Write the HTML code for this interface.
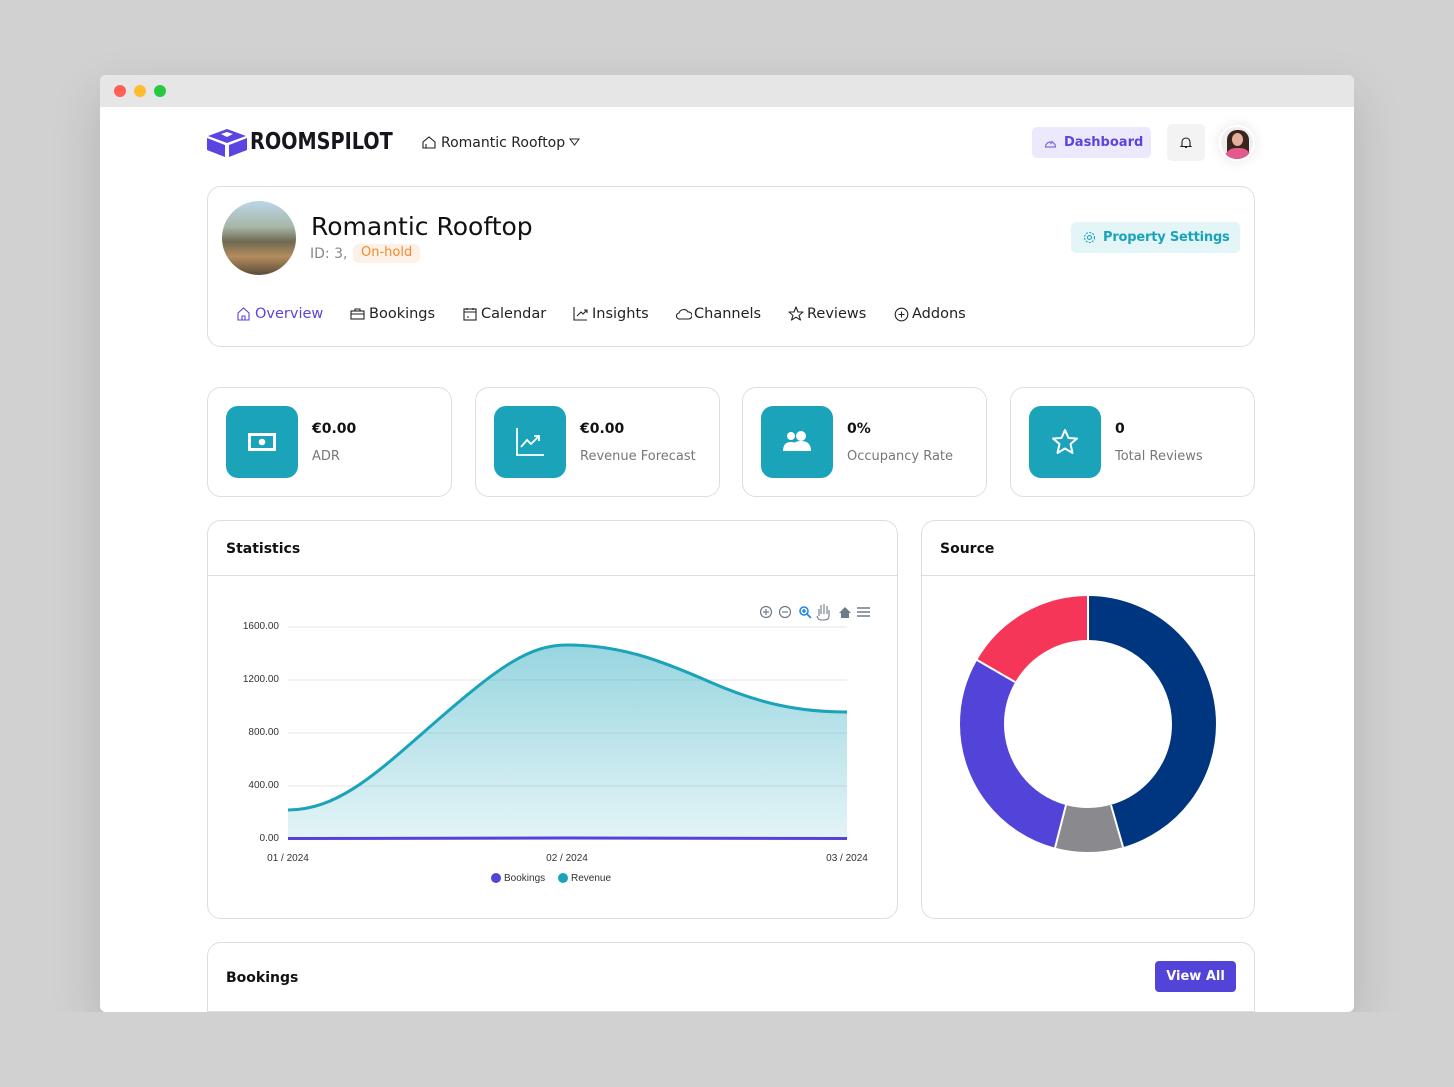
<!DOCTYPE html>
<html><head><meta charset="utf-8"><style>
*{box-sizing:border-box;margin:0;padding:0}
body{width:1454px;height:1087px;background:#d1d1d1;font-family:"DejaVu Sans","Liberation Sans",sans-serif;position:relative;overflow:hidden;color:#111}
.win{position:absolute;left:100px;top:75px;width:1254px;height:937px;background:#fff;border-radius:6px;overflow:hidden;box-shadow:0 20px 50px rgba(0,0,0,.15)}
.bar{height:32px;background:#e6e6e6;position:relative}
.dot{position:absolute;top:10px;width:12px;height:12px;border-radius:50%}
.a{position:absolute}
.card{position:absolute;border:1px solid #dedede;border-radius:14px;background:#fff}
.ic{position:absolute;left:18px;top:18px;width:72px;height:72px;border-radius:12px;background:#1aa3b9}
.val{position:absolute;left:104px;top:33px;font-weight:bold;font-size:14px}
.lbl{position:absolute;left:104px;top:61px;font-size:13px;color:#777}
.nav{position:absolute;top:306px;font-size:14.5px;color:#222}
.ni{position:absolute;top:306px}
.h{position:absolute;left:18px;top:20px;font-weight:bold;font-size:14px}
</style></head><body>
<div class="win">
<div class="bar"><div class="dot" style="left:14px;background:#fe5f57"></div><div class="dot" style="left:34px;background:#febc2e"></div><div class="dot" style="left:54px;background:#28c840"></div></div>
</div>
<!-- header -->
<svg class="a" style="left:207px;top:129px" width="40" height="28" viewBox="0 0 40 28"><polygon points="20,0 39,7 20,14 1,7" fill="#5b45e0"/><polygon points="0,9 18,16 18,28 0,21" fill="#5b45e0"/><polygon points="40,9 22,16 22,28 40,21" fill="#5b45e0"/><polygon points="14,5 20,3 26,5 20,8" fill="#fff"/></svg>
<div class="a" style="left:250px;top:129px;font-size:23px;font-weight:bold;color:#16161e;transform:scaleX(.93);transform-origin:left;font-family:'DejaVu Sans Condensed','DejaVu Sans',sans-serif">ROOMSPILOT</div>
<svg class="a" style="left:422px;top:136px" width="14" height="13" viewBox="0 0 14 13"><path d="M1 12V6l6-5 6 5v6zM4 12V8" fill="none" stroke="#222" stroke-width="1.1"/></svg>
<div class="a" style="left:441px;top:135px;font-size:14px;color:#222">Romantic Rooftop</div>
<svg class="a" style="left:569px;top:138px" width="11" height="8"><path d="M1 1h9L5.5 7z" fill="none" stroke="#222" stroke-width="1"/></svg>
<div class="a" style="left:1032px;top:127px;width:119px;height:31px;background:#ebe9fb;border-radius:5px;color:#5a45dc;font-weight:bold;font-size:13px;padding:8px 0 0 32px">Dashboard</div>
<svg class="a" style="left:1044px;top:137px" width="13" height="12" viewBox="0 0 13 12"><path d="M1.5 10a5 5 0 1 1 10 0Z M6.5 7l2-3" fill="none" stroke="#7d6ee6" stroke-width="1.2"/></svg>
<div class="a" style="left:1167px;top:124px;width:38px;height:37px;background:#f3f3f3;border-radius:5px"></div>
<svg class="a" style="left:1180px;top:136px" width="12" height="13" viewBox="0 0 12 13"><path d="M2 9.5V6a4 4 0 0 1 8 0v3.5l1 1H1z M5 11.5h2" fill="none" stroke="#222" stroke-width="1.1"/></svg>
<div class="a" style="left:1219px;top:125px;width:36px;height:36px;border-radius:50%;background:#eee;border:2px solid #fff;box-shadow:0 0 14px rgba(0,0,0,.1);overflow:hidden"><div style="position:absolute;left:6px;top:3px;width:22px;height:30px;border-radius:10px 10px 2px 2px;background:#3a2420"></div><div style="position:absolute;left:11px;top:6px;width:11px;height:13px;border-radius:50%;background:#e2b09a"></div><div style="position:absolute;left:3px;top:21px;width:28px;height:16px;border-radius:12px 12px 0 0;background:#e45a8e"></div></div>
<!-- property card -->
<div class="card" style="left:207px;top:186px;width:1048px;height:161px"></div>
<div class="a" style="left:222px;top:201px;width:74px;height:74px;border-radius:50%;background:linear-gradient(180deg,#bcd6e8 0%,#a7b6a5 35%,#6e6a52 55%,#b48c5e 75%,#5a4b3a 100%)"></div>
<div class="a" style="left:311px;top:212px;font-size:25px;color:#111">Romantic Rooftop</div>
<div class="a" style="left:310px;top:246px;font-size:14px;color:#888">ID: 3,</div>
<div class="a" style="left:353px;top:244px;height:19px;padding:1px 8px;background:#fdf0e6;color:#f08a2c;border-radius:6px;font-size:13px">On-hold</div>
<div class="a" style="left:1071px;top:222px;width:169px;height:31px;background:#e4f5f8;border-radius:5px;color:#1aa3b9;font-weight:bold;font-size:13px;padding:8px 0 0 32px;letter-spacing:-.2px">Property Settings</div>
<svg class="a" style="left:1083px;top:231px" width="13" height="13" viewBox="0 0 13 13"><circle cx="6.5" cy="6.5" r="2" fill="none" stroke="#1aa3b9" stroke-width="1.1"/><circle cx="6.5" cy="6.5" r="5" fill="none" stroke="#1aa3b9" stroke-width="1.1" stroke-dasharray="2 1.3"/></svg>
<svg class="ni" style="left:237px;top:307px" width="13" height="14" viewBox="0 0 13 14"><path d="M1 13V6l5.5-5 5.5 5v7zM5 13V9h3v4" fill="none" stroke="#5a45dc" stroke-width="1.1"/></svg>
<div class="nav" style="left:255px;color:#5a45dc">Overview</div>
<svg class="ni" style="left:350px;top:308px" width="15" height="12"><rect x="1" y="3" width="13" height="8" fill="none" stroke="#222" stroke-width="1.1"/><path d="M5 3V1h5v2M1 6h13" fill="none" stroke="#222" stroke-width="1.1"/></svg>
<div class="nav" style="left:369px">Bookings</div>
<svg class="ni" style="left:463px;top:307px" width="14" height="14"><rect x="1" y="2" width="12" height="11" fill="none" stroke="#222" stroke-width="1.1"/><path d="M1 5h12M4 1v2M10 1v2M4 10h2" stroke="#222" stroke-width="1.1"/></svg>
<div class="nav" style="left:481px">Calendar</div>
<svg class="ni" style="left:573px;top:306px" width="15" height="15"><path d="M1 1v13h13M4 10l4-4 2 2 4-4M11 4h3v3" fill="none" stroke="#222" stroke-width="1.1"/></svg>
<div class="nav" style="left:592px">Insights</div>
<svg class="ni" style="left:676px;top:308px" width="16" height="12"><path d="M4 11a3 3 0 0 1-1-6 5 5 0 0 1 9-1 3.5 3.5 0 0 1 1 7z" fill="none" stroke="#222" stroke-width="1.1"/></svg>
<div class="nav" style="left:694px">Channels</div>
<svg class="ni" style="left:788px;top:306px" width="16" height="15" viewBox="0 0 16 15"><polygon points="8,1 10,6 15,6 11,9.5 12.5,14 8,11.2 3.5,14 5,9.5 1,6 6,6" fill="none" stroke="#222" stroke-width="1.1" stroke-linejoin="round"/></svg>
<div class="nav" style="left:807px">Reviews</div>
<svg class="ni" style="left:894px;top:307px" width="15" height="15"><circle cx="7.5" cy="7.5" r="6.3" fill="none" stroke="#222" stroke-width="1.1"/><path d="M7.5 4.5v6M4.5 7.5h6" stroke="#222" stroke-width="1.1"/></svg>
<div class="nav" style="left:912px">Addons</div>
<!-- stat cards -->
<div class="card" style="left:207px;top:387px;width:245px;height:110px"><div class="ic"><svg style="position:absolute;left:22px;top:27px" width="28" height="18"><rect x="1.5" y="1.5" width="25" height="15" fill="none" stroke="#fff" stroke-width="3"/><circle cx="14" cy="9" r="3.3" fill="#fff"/></svg></div><div class="val">€0.00</div><div class="lbl">ADR</div></div>
<div class="card" style="left:475px;top:387px;width:245px;height:110px"><div class="ic"><svg style="position:absolute;left:21px;top:21px" width="30" height="30"><path d="M2 1v27h27 M6 20l6-7 4 4 8-8 M19 9h5v5" fill="none" stroke="#fff" stroke-width="1.8"/></svg></div><div class="val">€0.00</div><div class="lbl">Revenue Forecast</div></div>
<div class="card" style="left:742px;top:387px;width:245px;height:110px"><div class="ic"><svg style="position:absolute;left:22px;top:24px" width="28" height="22"><circle cx="8" cy="6" r="4" fill="#fff"/><circle cx="18" cy="6" r="5" fill="#fff"/><path d="M0 21q0-9 8-9 8 0 8 9z M8 21q0-10 10-10 10 0 10 10z" fill="#fff"/></svg></div><div class="val">0%</div><div class="lbl">Occupancy Rate</div></div>
<div class="card" style="left:1010px;top:387px;width:245px;height:110px"><div class="ic"><svg style="position:absolute;left:21px;top:21px" width="30" height="30" viewBox="0 0 30 30"><polygon points="15,3 18.5,11 27,11.5 20.5,17 22.5,26 15,21.5 7.5,26 9.5,17 3,11.5 11.5,11" fill="none" stroke="#fff" stroke-width="2" stroke-linejoin="round"/></svg></div><div class="val">0</div><div class="lbl">Total Reviews</div></div>
<!-- statistics -->
<div class="card" style="left:207px;top:520px;width:691px;height:399px"><div class="h">Statistics</div><div style="position:absolute;left:0;right:0;top:54px;border-top:1px solid #dedede"></div></div>
<svg class="a" style="left:230px;top:600px" width="660" height="290" font-family="Liberation Sans,sans-serif" font-size="10" fill="#333">
<defs><linearGradient id="g" x1="0" y1="0" x2="0" y2="1"><stop offset="0" stop-color="#1aa3b9" stop-opacity=".45"/><stop offset="1" stop-color="#1aa3b9" stop-opacity=".12"/></linearGradient></defs>
<g stroke="#e6e6e6"><line x1="58" y1="27" x2="617" y2="27"/><line x1="58" y1="80" x2="617" y2="80"/><line x1="58" y1="133" x2="617" y2="133"/><line x1="58" y1="186" x2="617" y2="186"/></g>
<g text-anchor="end"><text x="49" y="29">1600.00</text><text x="49" y="82">1200.00</text><text x="49" y="135">800.00</text><text x="49" y="188">400.00</text><text x="49" y="241">0.00</text></g>
<path d="M58 210C110 210 150 170 210 118C270 66 300 45 337 45C390 45 430 60 480 82C530 104 570 112 617 112V238H58Z" fill="url(#g)"/>
<path d="M58 210C110 210 150 170 210 118C270 66 300 45 337 45C390 45 430 60 480 82C530 104 570 112 617 112" fill="none" stroke="#1aa3b9" stroke-width="3"/>
<path d="M58 238.5L337 238L617 238.5" stroke="#5243d9" stroke-width="3" fill="none"/>
<g text-anchor="middle"><text x="58" y="261">01 / 2024</text><text x="337" y="261">02 / 2024</text><text x="617" y="261">03 / 2024</text></g>
<circle cx="266" cy="278" r="5" fill="#5243d9"/><text x="274" y="281">Bookings</text>
<circle cx="333" cy="278" r="5" fill="#1aa3b9"/><text x="341" y="281">Revenue</text>
<g fill="none" stroke="#6e7a88" stroke-width="1.2"><circle cx="536" cy="12" r="5.5"/><path d="M533 12h6M536 9v6"/><circle cx="555" cy="12" r="5.5"/><path d="M552 12h6"/></g>
<g fill="none" stroke="#1e88e5" stroke-width="1.6"><circle cx="574" cy="11" r="4"/><path d="M577 14l4 4M572 11h4M574 9v4"/></g>
<path d="M589 16v-7M591 14v-9M594 14v-10M597 14v-8M599 10v6q0 4-5 4h-3q-3 0-4-4" fill="none" stroke="#6e7a88" stroke-width="1.1"/>
<path d="M609 13l6-6 6 6h-2v5h-8v-5z" fill="#6e7a88"/>
<path d="M627 8h13M627 12h13M627 16h13" stroke="#6e7a88" stroke-width="1.5"/>
</svg>
<!-- source -->
<div class="card" style="left:921px;top:520px;width:334px;height:399px"><div class="h">Source</div><div style="position:absolute;left:0;right:0;top:54px;border-top:1px solid #dedede"></div></div>
<svg class="a" style="left:960px;top:596px" width="256" height="256" viewBox="0 0 256 256">
<g transform="rotate(-90 128 128)" fill="none" stroke-width="44">
<circle cx="128" cy="128" r="106" stroke="#003580" stroke-dasharray="303.4 400"/>
<circle cx="128" cy="128" r="106" stroke="#8a8a8e" stroke-dasharray="0 303.4 57.4 400"/>
<circle cx="128" cy="128" r="106" stroke="#5243d9" stroke-dasharray="0 360.8 194.3 400"/>
<circle cx="128" cy="128" r="106" stroke="#f53659" stroke-dasharray="0 555.1 111 400"/>
</g>
<g stroke="#fff" stroke-width="2"><line x1="128" y1="0" x2="128" y2="44"/><line x1="163" y1="251" x2="151" y2="209"/><line x1="95" y1="252" x2="106" y2="209"/><line x1="17" y1="64" x2="55" y2="86"/></g>
</svg>
<!-- bookings -->
<div class="card" style="left:207px;top:942px;width:1048px;height:100px"><div class="h" style="top:27px">Bookings</div><div style="position:absolute;left:0;right:0;top:68px;border-top:1px solid #dedede"></div></div>
<div class="a" style="left:1155px;top:961px;width:81px;height:31px;background:#5243d9;border-radius:4px;color:#fff;font-weight:bold;font-size:13px;text-align:center;line-height:31px">View All</div>
<div class="a" style="left:0;top:1012px;width:1454px;height:75px;background:#d1d1d1"></div>
</body></html>
